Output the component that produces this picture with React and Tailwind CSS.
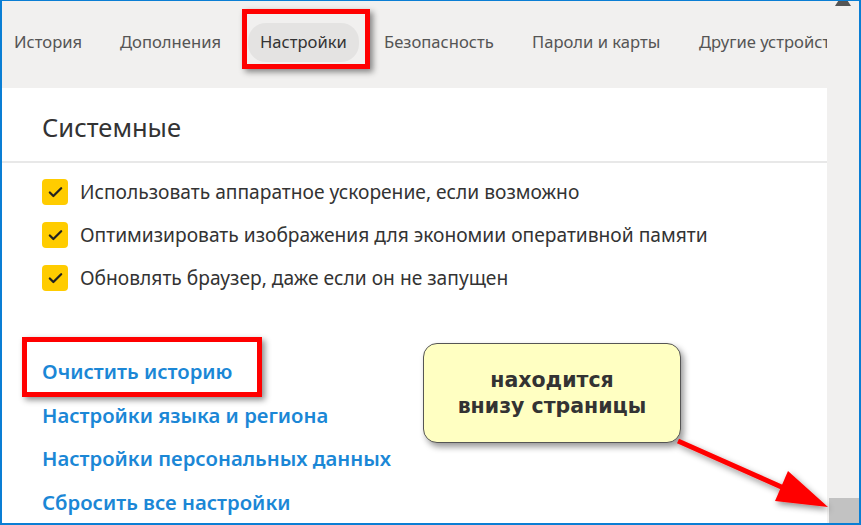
import { Check } from "lucide-react";

const tabs = [
  { label: "История", w: "w-[106px]" },
  { label: "Дополнения", w: "w-[140px]" },
  { label: "Настройки", active: true, w: "w-[124px]" },
  { label: "Безопасность", w: "w-[148px]" },
  { label: "Пароли и карты", w: "w-[167px]" },
  { label: "Другие устройства", w: "w-[200px]" },
];

const options = [
  "Использовать аппаратное ускорение, если возможно",
  "Оптимизировать изображения для экономии оперативной памяти",
  "Обновлять браузер, даже если он не запущен",
];

const links = [
  "Очистить историю",
  "Настройки языка и региона",
  "Настройки персональных данных",
  "Сбросить все настройки",
];

function Arrow() {
  return (
    <svg
      className="absolute left-0 top-0 pointer-events-none"
      width="861"
      height="525"
      viewBox="0 0 861 525"
    >
      <defs>
        <filter id="sh" x="-20%" y="-20%" width="140%" height="140%">
          <feDropShadow dx="2" dy="3" stdDeviation="3" floodColor="#000" floodOpacity="0.45" />
        </filter>
      </defs>
      <g filter="url(#sh)" fill="#ff0000" stroke="none">
        <line x1="676" y1="440" x2="784" y2="488" stroke="#ff0000" strokeWidth="5" />
        <polygon points="826,506 786,470 773,500" />
      </g>
    </svg>
  );
}

export default function App() {
  return (
    <div
      className="relative w-[861px] h-[525px] overflow-hidden bg-[#f1f0ef] border-[#0a7ed4] border-x-2 border-t border-b-2 flex"
      style={{ fontFamily: '"Noto Sans", "Open Sans", sans-serif' }}
    >
      <div className="flex flex-col w-[825px] shrink-0">
        <nav className="h-[87px] flex items-center pl-[12px] pb-[4px] text-[16.6px] text-[#555] overflow-hidden">
          {tabs.map((t) => (
            <div key={t.label} className={`${t.w} shrink-0 flex items-center`}>
              {t.active ? (
                <span className="-ml-[12px] px-[12px] py-[7px] rounded-[18px] bg-[#e4e3e2] text-[#333] whitespace-nowrap">
                  {t.label}
                </span>
              ) : (
                <span className="whitespace-nowrap">{t.label}</span>
              )}
            </div>
          ))}
        </nav>

        <main className="flex-1 bg-white">
          <h2 className="h-[75px] flex items-center pl-[40px] pt-[6px] text-[25.5px] text-[#333] border-b-2 border-[#e8e8e8]">
            Системные
          </h2>
          <ul className="pt-[16px] pl-[40px] flex flex-col gap-[17px]">
            {options.map((o) => (
              <li key={o} className="flex items-center gap-[12px] h-[26px]">
                <span className="w-[26px] h-[26px] rounded-[4px] bg-[#ffcc00] flex items-center justify-center shrink-0">
                  <Check size={17} strokeWidth={3.2} color="#222" />
                </span>
                <span className="text-[19.2px] text-[#333] whitespace-nowrap">{o}</span>
              </li>
            ))}
          </ul>
          <div className="pt-[66px] pl-[40px] flex flex-col gap-[15px]">
            {links.map((l) => (
              <a key={l} className="text-[20.3px] leading-[28.5px] font-semibold text-[#1b87d6]">
                {l}
              </a>
            ))}
          </div>
        </main>
      </div>

      <aside className="flex-1 flex flex-col justify-between">
        <div className="h-[5px] flex justify-center">
          <span className="w-[16px] h-[5px] bg-[#555] [clip-path:polygon(20%_0,80%_0,100%_100%,0_100%)]" />
        </div>
        <div className="h-[25px] ml-[2px] bg-[#c2c2c2]" />
      </aside>

      {/* annotations */}
      <div className="absolute left-[240px] top-[8px] w-[128px] h-[60px] border-[5px] border-[#ff0000] shadow-[3px_3px_6px_rgba(0,0,0,0.45)]" />
      <div className="absolute left-[20px] top-[336px] w-[240px] h-[60px] border-[5px] border-[#ff0000] shadow-[3px_3px_6px_rgba(0,0,0,0.45)]" />
      <div
        className="absolute left-[421px] top-[342px] w-[258px] h-[100px] rounded-[14px] border border-[#555] bg-[#ffffc2] shadow-[3px_4px_6px_rgba(0,0,0,0.4)] flex flex-col items-center justify-center text-[20.5px] leading-[26px] font-bold text-[#333]"
        style={{ fontFamily: '"DejaVu Sans", Verdana, sans-serif' }}
      >
        <span>находится</span>
        <span>внизу страницы</span>
      </div>
      <Arrow />
    </div>
  );
}
